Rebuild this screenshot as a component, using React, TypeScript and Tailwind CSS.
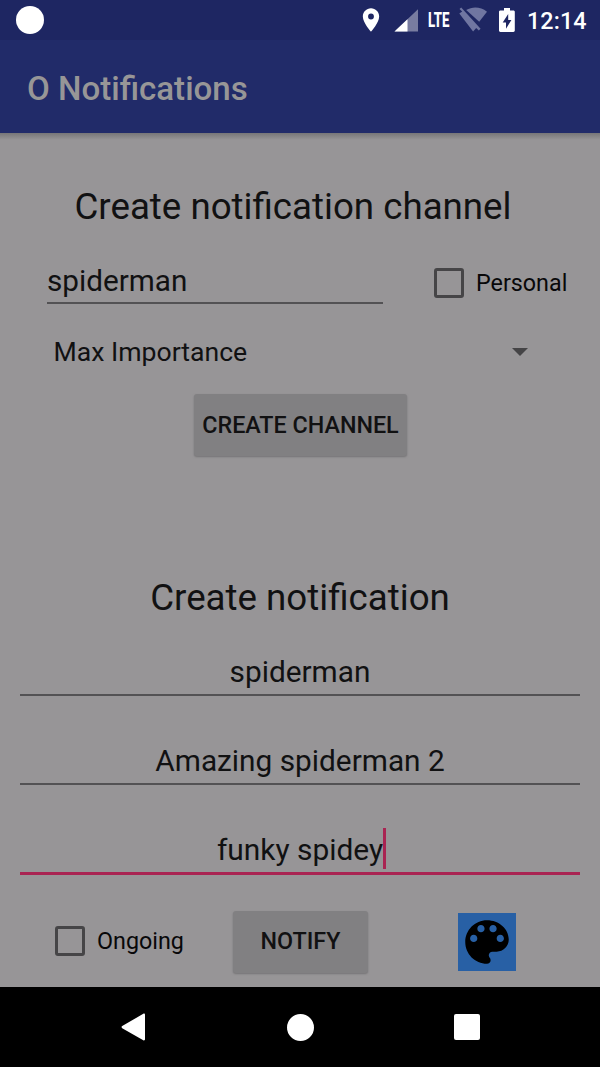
import type { ReactNode } from "react";

function StatusBar() {
  return (
    <div className="flex h-[40px] items-center justify-between bg-[#1e2662] pl-4">
      <div className="size-[28px] rounded-full bg-white" />
      <div className="flex h-[40px] items-center pr-[14px] text-white">
        <svg viewBox="0 0 24 24" className="size-[28px]" fill="currentColor">
          <path d="M12 2C8.130 2 5 5.130 5 9c0 5.250 7 13 7 13s7-7.750 7-13c0-3.870-3.130-7-7-7zm0 9.500a2.500 2.500 0 0 1 0-5 2.500 2.500 0 0 1 0 5z" />
        </svg>
        <svg viewBox="0 0 24 24" className="ml-[9px] size-[24px]" fill="currentColor">
          <path d="M24 1.300V23.500H.5z" opacity=".4" />
          <path d="M13.500 11.200V23.500H.5z" />
        </svg>
        <span className="ml-[10px] w-[22px] origin-left scale-x-[0.66] whitespace-nowrap text-[20px] leading-none font-extrabold">LTE</span>
        <svg viewBox="0 0 28 26" className="ml-[9px] h-[26px] w-[28px] text-[#7076a1]" fill="currentColor">
          <path d="M7.200 3.100C13.800-.7 21.600-.2 28 4.800L20.200 14.700z" />
          <path d="M2.200.4 21.600 21.800 19.800 23.600 17.200 20.900 14.100 24.500.300 6.500 3.200 4.600.500 1.900z" />
        </svg>
        <svg viewBox="0 0 16 24" className="ml-[12px] h-[24px] w-[16px]" fill="currentColor">
          <path fillRule="evenodd" d="M5 0h6v2.400h3.400c.800 0 1.400.600 1.400 1.400v18.800c0 .800-.600 1.400-1.400 1.400H1.400C.6 24 0 23.400 0 22.600V3.800c0-.800.600-1.400 1.400-1.400H5zM9.200 6 3.700 14.500h3.300v6.300l5.400-8.800H9.200z" />
        </svg>
        <span className="ml-[12px] w-[59px] whitespace-nowrap pt-[3px] text-[23.300px] leading-none font-medium tracking-[0.1px]">12:14</span>
      </div>
    </div>
  );
}

function Check({ label }: { label: string }) {
  return (
    <label className="flex items-center gap-[12px] text-[23.300px] leading-[30px] text-[#080809]">
      <span className="size-[30px] rounded-[3px] border-[3px] border-[#464547]" />
      <span>{label}</span>
    </label>
  );
}

function Field({ children, active = false }: { children: ReactNode; active?: boolean }) {
  return (
    <div
      className={
        active
          ? "mx-5 flex h-[53px] justify-center border-b-[3px] border-[#a92452] pt-[8px] text-[29.900px] leading-[40px]"
          : "mx-5 flex h-[50px] justify-center border-b-2 border-[#535254] pt-[6px] text-[29.800px] leading-[40px]"
      }
    >
      {children}
    </div>
  );
}

function RaisedButton({ label, className }: { label: string; className: string }) {
  return (
    <button
      className={`flex h-[62px] items-center justify-center rounded-[3px] bg-[#818082] text-[23.300px] font-medium whitespace-nowrap shadow-[0_1px_2px_#747375] ${className}`}
    >
      {label}
    </button>
  );
}

export default function App() {
  return (
    <div className="flex h-[1067px] w-[600px] flex-col overflow-hidden bg-[#979597] font-['Roboto',sans-serif] text-[#111112]">
      <StatusBar />
      <header className="flex h-[93px] items-center bg-[#212b69] pt-[4px] pl-[27px] text-[33.100px] font-medium text-[#979697]">
        O Notifications
      </header>
      <div className="h-[7px] bg-linear-to-b from-[#777678] to-[#979597]" />
      <main className="flex h-[847px] flex-col">
        <h1 className="mt-[44px] pr-[14px] text-center text-[36.700px] leading-[46px]">Create notification channel</h1>
        <section className="mt-[25px] flex h-[50px] items-start">
          <div className="ml-[47px] h-[49px] w-[336px] border-b-2 border-[#535254] pt-[6px] text-[29.700px] leading-[40px]">
            spiderman
          </div>
          <div className="ml-[51px] pt-[12.500px]">
            <Check label="Personal" />
          </div>
        </section>
        <div className="mt-[27px] flex h-[40px] items-center justify-between pr-[72px] pl-[53.500px] text-[26.600px]">
          <span>Max Importance</span>
          <svg viewBox="0 0 16 8" className="h-[8px] w-[16px]" fill="#454446">
            <path d="M0 0h16L8 8z" />
          </svg>
        </div>
        <RaisedButton label="CREATE CHANNEL" className="mt-[22px] ml-[194px] w-[213px]" />
        <h2 className="mt-[119px] text-center text-[36.700px] leading-[46px]">Create notification</h2>
        <div className="mt-[25px]">
          <Field>spiderman</Field>
        </div>
        <div className="mt-[39px]">
          <Field>Amazing spiderman 2</Field>
        </div>
        <div className="mt-[37px]">
          <Field active>
            <span className="relative">
              funky spidey
              <span className="absolute -top-[2px] left-full h-[41px] w-[3px] bg-[#a92452]" />
            </span>
          </Field>
        </div>
        <div className="mt-[36px] flex h-[62px] items-center pl-[55px]">
          <div className="w-[178px] pb-[2px]">
            <Check label="Ongoing" />
          </div>
          <RaisedButton label="NOTIFY" className="w-[135px] pb-[2px]" />
          <div className="ml-[90px] size-[58px] bg-[#2860a5]">
            <svg viewBox="0 0 24 24" className="size-[58px]" fill="#000">
              <path d="M12 3c-4.970 0-9 4.030-9 9s4.030 9 9 9c.830 0 1.500-.670 1.500-1.500 0-.390-.150-.740-.390-1.010-.230-.260-.380-.610-.380-.990 0-.830.670-1.500 1.500-1.500H16c2.760 0 5-2.240 5-5 0-4.420-4.030-8-9-8zm-5.500 9c-.830 0-1.500-.670-1.500-1.500S5.670 9 6.500 9 8 9.670 8 10.500 7.330 12 6.500 12zm3-4C8.670 8 8 7.330 8 6.500S8.670 5 9.500 5s1.500.670 1.500 1.500S10.330 8 9.500 8zm5 0c-.830 0-1.500-.670-1.500-1.500S13.670 5 14.500 5s1.500.670 1.500 1.500S15.330 8 14.500 8zm3 4c-.830 0-1.500-.670-1.500-1.500S16.670 9 17.500 9s1.500.670 1.500 1.500-.670 1.500-1.500 1.500z" />
            </svg>
          </div>
        </div>
      </main>
      <nav className="flex h-[80px] items-center bg-black pl-[121px] text-white">
        <svg viewBox="0 0 24 28" className="h-[28px] w-[24px]" fill="currentColor">
          <path d="M22.300.8c.900-.500 1.700 0 1.700 1v24.400c0 1-.800 1.500-1.700 1L1.200 15.200c-.900-.500-.900-1.700 0-2.200z" />
        </svg>
        <div className="ml-[141.500px] size-[27px] rounded-full bg-white" />
        <div className="ml-[140.500px] size-[26px] rounded-[2px] bg-white" />
      </nav>
    </div>
  );
}
